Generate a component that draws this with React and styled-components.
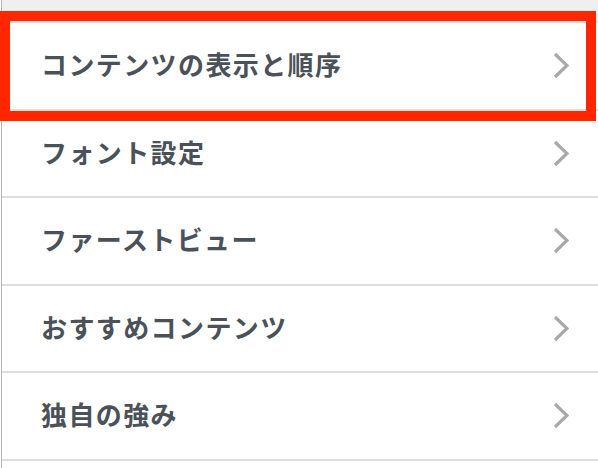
import React from "react";
import styled, { createGlobalStyle } from "styled-components";

const GlobalStyle = createGlobalStyle`
  html, body {
    margin: 0;
    padding: 0;
    background: #ffffff;
  }
  body {
    font-family: "Noto Sans CJK JP", "Noto Sans", sans-serif;
  }
`;

const Page = styled.div`
  position: relative;
  width: 598px;
  height: 468px;
  overflow: hidden;
  padding-left: 1px;
  box-sizing: border-box;
`;

const Panel = styled.div`
  border-left: 1px solid #b5b5b5;
  height: 100%;
  display: flex;
  flex-direction: column;
`;

const TopBand = styled.div`
  height: 21px;
  background: #efefef;
  flex-shrink: 0;
`;

const List = styled.ul`
  list-style: none;
  margin: 0;
  padding: 0;
  border-top: 2px solid #dedede;
`;

const Row = styled.li`
  display: flex;
  align-items: center;
  justify-content: space-between;
  height: 85.5px;
  padding: 0 29px 0 39px;
  border-bottom: 2px solid #dedede;
  background: #fff;
`;

const Label = styled.span`
  font-size: 26px;
  line-height: 1.2;
  font-weight: 700;
  letter-spacing: 1.4px;
  color: #4b5159;
  margin-bottom: 4px;
`;

// red annotation frame drawn over the first row
const Highlight = styled.div`
  position: absolute;
  left: 0;
  top: 11px;
  width: 596px;
  height: 110px;
  box-sizing: border-box;
  border: 10px solid #ff2600;
  pointer-events: none;
`;

const Chevron = () => (
  <svg width="16" height="27" viewBox="0 0 16 27">
    <polyline
      points="2,2 14,13.5 2,25"
      fill="none"
      stroke="#a9a9a9"
      strokeWidth="3.2"
    />
  </svg>
);

const items = [
  "コンテンツの表示と順序",
  "フォント設定",
  "ファーストビュー",
  "おすすめコンテンツ",
  "独自の強み",
];

const App = () => {
  return (
    <>
      <GlobalStyle />
      <Page>
        <Panel>
          <TopBand />
          <List>
            {items.map((label) => (
              <Row key={label}>
                <Label>{label}</Label>
                <Chevron />
              </Row>
            ))}
          </List>
        </Panel>
        <Highlight />
      </Page>
    </>
  );
};

export default App;
